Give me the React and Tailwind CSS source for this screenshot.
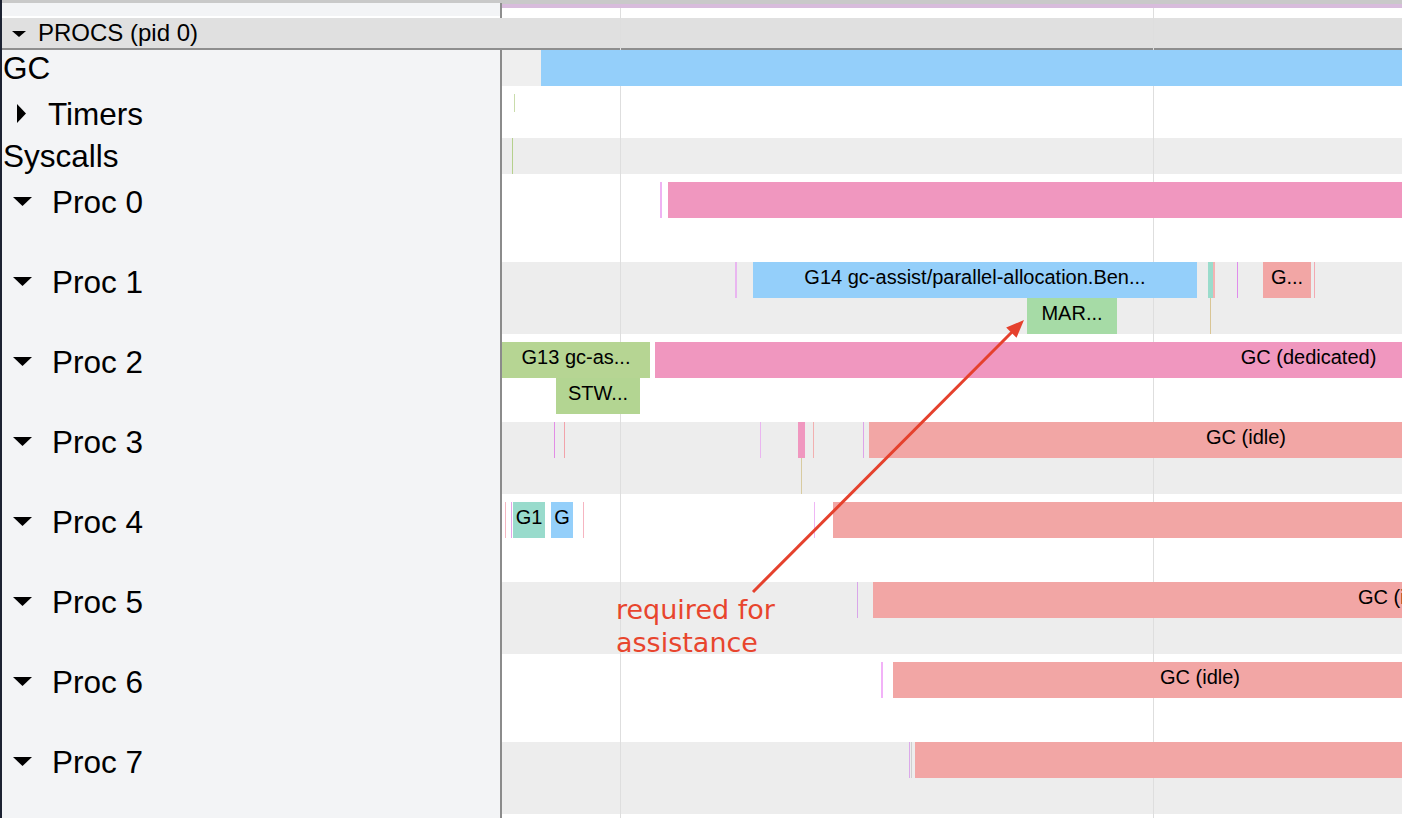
import React from 'react';

const BLUE = 'bg-[#94cffa]';
const PINK = 'bg-[#f097bf]';
const SALMON = 'bg-[#f2a6a5]';
const GREEN = 'bg-[#b6d593]';
const GRAY = 'bg-[#ededed]';

// timeline tracks, x is measured from the left edge of the timeline
const tracks = [
  { h: 36, bg: 'bg-[#efefef]', marks: [{ x: 39, w: 1400, c: BLUE }] },
  { h: 36, bg: 'bg-white', marks: [{ x: 12, w: 1, h: 18, c: 'bg-[#c9dcab]' }] },
  { h: 36, bg: GRAY, marks: [{ x: 10, w: 1, c: 'bg-[#b5d08c]' }] },
  {
    h: 72, bg: 'bg-white', marks: [
      { x: 158, w: 2, c: 'bg-[#efb3f2]' },
      { x: 166, w: 1400, c: PINK },
    ],
  },
  {
    h: 72, bg: GRAY, marks: [
      { x: 233, w: 2, c: 'bg-[#e9b6f0]' },
      { x: 251, w: 444, c: BLUE, label: 'G14 gc-assist/parallel-allocation.Ben...' },
      { x: 706, w: 5, c: 'bg-[#9adccc]' },
      { x: 711, w: 2, c: 'bg-[#f4b3b3]' },
      { x: 708, y: 36, w: 1, c: 'bg-[#d9c595]' },
      { x: 735, w: 1, c: 'bg-[#e08cec]' },
      { x: 761, w: 48, c: SALMON, label: 'G...' },
      { x: 812, w: 1, c: 'bg-[#f3a9b2]' },
      { x: 525, y: 36, w: 90, c: 'bg-[#a6dba6]', label: 'MAR...' },
    ],
  },
  {
    h: 72, bg: 'bg-white', marks: [
      { x: 0, w: 148, c: GREEN, label: 'G13 gc-as...' },
      { x: 153, w: 1307, c: PINK, label: 'GC (dedicated)' },
      { x: 54, y: 36, w: 84, c: 'bg-[#b3d592]', label: 'STW...' },
    ],
  },
  {
    h: 72, bg: GRAY, marks: [
      { x: 52, w: 1, c: 'bg-[#e28de6]' },
      { x: 62, w: 1, c: 'bg-[#f2a3aa]' },
      { x: 258, w: 1, c: 'bg-[#eab5f0]' },
      { x: 296, w: 7, c: PINK },
      { x: 299, y: 36, w: 1, c: 'bg-[#d8cba0]' },
      { x: 311, w: 1, c: 'bg-[#f2b0b0]' },
      { x: 361, w: 1, c: 'bg-[#dea4ea]' },
      { x: 367, w: 754, c: SALMON, label: 'GC (idle)' },
    ],
  },
  {
    h: 72, bg: 'bg-white', marks: [
      { x: 3, w: 1, c: 'bg-[#f5b6c0]' },
      { x: 9, w: 1, c: 'bg-[#e4a4e8]' },
      { x: 11, w: 32, c: 'bg-[#99dbcc]', label: 'G1' },
      { x: 49, w: 22, c: BLUE, label: 'G' },
      { x: 81, w: 1, c: 'bg-[#f6b5c1]' },
      { x: 312, w: 1, c: 'bg-[#efb6f5]' },
      { x: 331, w: 1400, c: SALMON },
    ],
  },
  {
    h: 72, bg: GRAY, marks: [
      { x: 355, w: 1, c: 'bg-[#d9a6e9]' },
      { x: 371, w: 1050, c: SALMON, label: 'GC (idle)' },
    ],
  },
  {
    h: 72, bg: 'bg-white', marks: [
      { x: 379, w: 2, c: 'bg-[#f2b2f8]' },
      { x: 391, w: 614, c: SALMON, label: 'GC (idle)' },
    ],
  },
  {
    h: 72, bg: GRAY, marks: [
      { x: 407, w: 1, c: 'bg-[#dba9ea]' },
      { x: 409, w: 1, c: 'bg-[#cfcfcf]' },
      { x: 413, w: 1400, c: SALMON },
    ],
  },
];

const procs = [0, 1, 2, 3, 4, 5, 6, 7];

function DownTri({ className }) {
  return (
    <svg width="19" height="9" viewBox="0 0 19 9" className={className}>
      <polygon points="0,0 19,0 9.5,9" fill="#000" />
    </svg>
  );
}

function Mark({ m }) {
  return (
    <div
      className={`absolute z-20 overflow-hidden whitespace-nowrap flex justify-center text-[20px] leading-[30px] text-black ${m.c}`}
      style={{ left: m.x, top: m.y || 0, width: m.w, height: m.h || 36 }}
    >
      {m.label}
    </div>
  );
}

export default function App() {
  return (
    <div className="relative w-[1402px] h-[818px] overflow-hidden bg-white flex font-['Liberation_Sans',Arial,sans-serif] text-black">
      {/* dark window edge */}
      <div className="w-[2px] shrink-0 bg-[#1c2232]" />

      <div className="flex-1 flex flex-col">
        {/* top strip */}
        <div className="h-[3px] bg-[#c9c9c9]" />
        <div className="h-[15px] flex">
          <div className="w-[498px] flex flex-col">
            <div className="flex-1 bg-[#f3f4f6]" />
            <div className="h-[2px] bg-white" />
          </div>
          <div className="w-[2px] bg-[#8e8e8e]" />
          <div className="flex-1 flex flex-col">
            <div className="h-px bg-[#c9c9c9]" />
            <div className="h-[4px] bg-[#d8bcdc]" />
            <div className="flex-1 bg-white" />
          </div>
        </div>

        {/* section header */}
        <div className="h-[32px] bg-[#e0e0e0] border-b-2 border-[#8e8e8e] flex items-center text-[24px] leading-[30px]">
          <svg width="14" height="6" viewBox="0 0 14 6" className="ml-[10px] mr-[12px] mt-[1px]">
            <polygon points="0,0 14,0 7,6" fill="#000" />
          </svg>
          <span>PROCS (pid 0)</span>
        </div>

        <div className="flex-1 flex">
          {/* track labels */}
          <div className="w-[498px] shrink-0 bg-[#f3f4f6] flex flex-col gap-2 text-[31.5px] leading-9">
            <div className="h-9 pl-px">GC</div>
            <div className="h-9 flex items-center">
              <svg width="9" height="19" viewBox="0 0 9 19" className="ml-[15px] mr-[22px] mt-[2px]">
                <polygon points="0,0 9,9.5 0,19" fill="#000" />
              </svg>
              <span className="mt-[4px]">Timers</span>
            </div>
            <div className="h-9 pl-px">Syscalls</div>
            {procs.map((p) => (
              <div key={p} className="h-[72px]">
                <div className="h-9 flex items-center">
                  <DownTri className="ml-[11px] mr-[20px] mt-[3px]" />
                  <span className="mt-[4px]">Proc {p}</span>
                </div>
              </div>
            ))}
          </div>
          <div className="w-[2px] shrink-0 bg-[#8b8b8b]" />

          {/* timeline */}
          <div className="flex-1 overflow-hidden flex flex-col gap-2 bg-white">
            {tracks.map((t, i) => (
              <div key={i} className={`relative shrink-0 ${t.bg}`} style={{ height: t.h }}>
                {t.marks.map((m, j) => (
                  <Mark key={j} m={m} />
                ))}
              </div>
            ))}
          </div>
        </div>
      </div>

      {/* time grid lines */}
      <div className="absolute z-10 left-[620px] top-[8px] bottom-0 w-px bg-[#dedede]" />
      <div className="absolute z-10 left-[1153px] top-[8px] bottom-0 w-px bg-[#dedede]" />

      {/* annotation */}
      <svg className="absolute inset-0 z-30 pointer-events-none" width="1402" height="818">
        <line x1="753" y1="592" x2="1013" y2="331" stroke="#e5412d" strokeWidth="3" />
        <polygon points="1024,320 1016.5,337.8 1006.2,327.6" fill="#e5412d" />
      </svg>
      <div className="absolute z-30 left-[616px] top-[593px] text-[27px] leading-[33px] text-[#e8452d] font-['DejaVu_Sans',sans-serif]">
        required for
        <br />
        assistance
      </div>
    </div>
  );
}
